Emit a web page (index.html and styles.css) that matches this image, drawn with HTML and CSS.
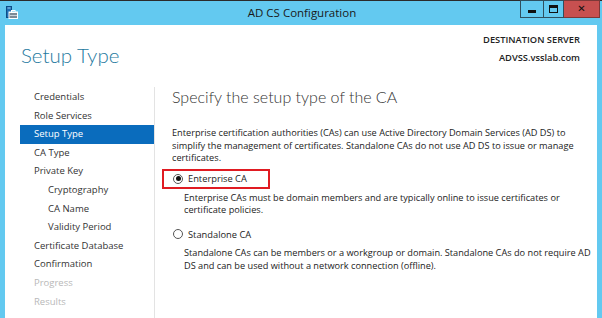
FILE: index.html
```html
<!DOCTYPE html>
<html>
<head>
<meta charset="utf-8">
<link rel="stylesheet" href="styles.css">
</head>
<body>
<div class="window">
  <div class="titlebar">
    <svg class="app-icon" width="12" height="13" viewBox="0 0 12 13">
      <rect x="0.5" y="0.5" width="5" height="11" fill="#1f6fb5" stroke="#0d4d86"/>
      <rect x="1.5" y="1.5" width="3" height="1" fill="#9fd3f5"/>
      <rect x="3" y="6" width="8.5" height="6.5" fill="#f2f2f2" stroke="#ffffff"/>
      <rect x="3.5" y="7" width="7.5" height="5" fill="#7d8a95"/>
      <rect x="3.5" y="9" width="7.5" height="1" fill="#c9d2d9"/>
      <rect x="5.5" y="4.5" width="3.5" height="2" fill="none" stroke="#ffffff"/>
    </svg>
    <div class="title">AD CS Configuration</div>
    <div class="controls">
      <div class="btn btn-min"><span class="min-glyph"></span></div>
      <div class="btn btn-max"><span class="max-glyph"></span></div>
      <div class="btn btn-close"><span class="close-glyph">✕</span></div>
    </div>
  </div>
  <div class="client">
    <div class="header">
      <h1 class="page-title">Setup Type</h1>
      <div class="dest">
        <div class="dest-label">DESTINATION SERVER</div>
        <div class="dest-name">ADVSS.vsslab.com</div>
      </div>
    </div>
    <div class="body">
      <ul class="nav">
        <li>Credentials</li>
        <li>Role Services</li>
        <li class="active">Setup Type</li>
        <li>CA Type</li>
        <li>Private Key</li>
        <li class="sub">Cryptography</li>
        <li class="sub">CA Name</li>
        <li class="sub">Validity Period</li>
        <li>Certificate Database</li>
        <li>Confirmation</li>
        <li class="disabled">Progress</li>
        <li class="disabled">Results</li>
      </ul>
      <div class="main">
        <h2 class="main-title">Specify the setup type of the CA</h2>
        <p class="intro">Enterprise certification authorities (CAs) can use Active Directory Domain Services (AD DS) to<br>simplify the management of certificates. Standalone CAs do not use AD DS to issue or manage<br>certificates.</p>
        <div class="option">
          <div class="option-row highlighted">
            <span class="radio checked"></span>
            <span class="option-label">Enterprise CA</span>
          </div>
          <p class="option-desc">Enterprise CAs must be domain members and are typically online to issue certificates or<br>certificate policies.</p>
        </div>
        <div class="option">
          <div class="option-row">
            <span class="radio"></span>
            <span class="option-label">Standalone CA</span>
          </div>
          <p class="option-desc">Standalone CAs can be members or a workgroup or domain. Standalone CAs do not require AD<br>DS and can be used without a network connection (offline).</p>
        </div>
      </div>
    </div>
  </div>
</div>
</body>
</html>
```

FILE: styles.css
```css
* { box-sizing: border-box; }
html, body { margin: 0; padding: 0; }
body {
  width: 602px;
  height: 318px;
  overflow: hidden;
  font-family: "Open Sans", "Noto Sans", sans-serif;
  background: #ffffff;
}
.window {
  width: 602px;
  height: 318px;
  background: #63c9f0;
  border-top: 1px solid #2b2b2b;
  display: flex;
  flex-direction: column;
}
.titlebar {
  height: 24px;
  position: relative;
  display: flex;
  align-items: center;
  justify-content: center;
}
.app-icon {
  position: absolute;
  left: 6px;
  top: 5px;
}
.title {
  font-size: 11.5px;
  color: #1a1a1a;
  margin-top: -1px;
  margin-left: 2px;
}
.controls {
  position: absolute;
  right: 2px;
  top: -1px;
  display: flex;
  height: 18px;
}
.btn {
  height: 18px;
  border: 1px solid #2f4f5f;
  display: flex;
  align-items: center;
  justify-content: center;
}
.btn-min { width: 23px; border-right: none; }
.btn-max { width: 21px; }
.btn-close {
  width: 36px;
  background: #c75050;
  border-left: none;
  border-color: #7c3838;
}
.min-glyph {
  width: 8px;
  height: 3px;
  background: #111;
  margin-top: 5px;
}
.max-glyph {
  width: 9px;
  height: 8px;
  border: 1px solid #111;
  border-top-width: 3px;
}
.close-glyph {
  font-family: "DejaVu Sans", sans-serif;
  font-size: 10px;
  font-weight: bold;
  color: #111;
  line-height: 1;
}
.client {
  flex: 1;
  background: #ffffff;
  margin: 0 5px;
  display: flex;
  flex-direction: column;
}
.header {
  display: flex;
  justify-content: space-between;
  padding: 0 17px 0 16px;
  height: 62px;
}
.page-title {
  margin: 18px 0 0 0;
  font-family: "Lato", "Open Sans", sans-serif;
  font-weight: 300;
  font-size: 20.5px;
  line-height: 24px;
  color: #1f7aa0;
}
.dest {
  text-align: right;
  margin-top: 6px;
  font-size: 9.3px;
  color: #222;
  line-height: 18px;
}
.dest-label { font-weight: 600; }
.dest-name { font-weight: 600; }
.body {
  flex: 1;
  display: flex;
}
.nav {
  list-style: none;
  margin: 0;
  padding: 1px 0 0 15px;
  width: 150px;
  border-right: 1px solid #e3e3e3;
  font-size: 9.5px;
  color: #333;
}
.nav li {
  height: 18.6px;
  line-height: 18.6px;
  padding-left: 14px;
}
.nav li.active {
  background: #0a6cbd;
  color: #ffffff;
}
.nav li.sub { padding-left: 28px; }
.nav li.disabled { color: #b8b8b8; }
.main {
  flex: 1;
  min-width: 0;
  padding-left: 17px;
  color: #222;
}
.main-title {
  margin: 0;
  font-family: "Lato", "Open Sans", sans-serif;
  font-weight: 300;
  font-size: 16px;
  color: #333;
  line-height: 20px;
}
.intro {
  margin: 20px 0 0 0;
  font-size: 9.2px;
  line-height: 12.5px;
  white-space: nowrap;
}
.option-row {
  display: flex;
  align-items: center;
  height: 20px;
  width: 108px;
  margin-left: -10px;
  padding-left: 9px;
  margin-top: 4px;
  border: 2px solid transparent;
}
.option-row.highlighted { border-color: #e01b22; }
.radio {
  width: 10px;
  height: 10px;
  border: 1px solid #555;
  border-radius: 50%;
  display: flex;
  align-items: center;
  justify-content: center;
  background: #fff;
}
.radio.checked::after {
  content: "";
  width: 5px;
  height: 5px;
  border-radius: 50%;
  background: #111;
}
.option-label {
  font-size: 9.3px;
  margin-left: 5px;
}
.option-desc {
  margin: 3px 0 0 12px;
  font-size: 9.2px;
  line-height: 12.8px;
  white-space: nowrap;
}
.option + .option .option-row { margin-top: 7px; }
```
